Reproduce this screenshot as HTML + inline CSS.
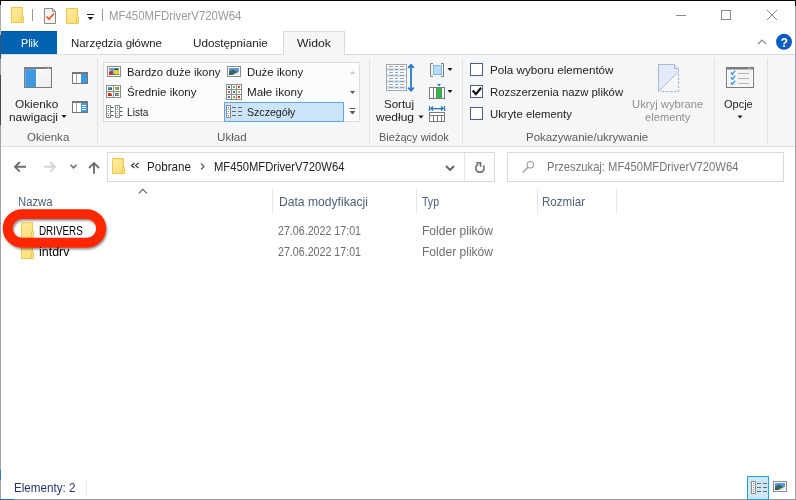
<!DOCTYPE html>
<html><head><meta charset="utf-8"><title>Explorer</title>
<style>
html,body{margin:0;padding:0}
body{width:796px;height:500px;overflow:hidden;position:relative;background:#fff;font-family:"Liberation Sans",sans-serif;font-size:12px}
.t{position:absolute;white-space:pre;line-height:14px;font-size:11.6px;transform-origin:0 0}
.a{position:absolute}
#svg{position:absolute;left:0;top:0}

</style></head><body>
<!-- window frame -->
<div class="a" style="left:0;top:0;width:796px;height:1px;background:#0a0a0a"></div>
<div class="a" style="left:0;top:0;width:1px;height:500px;background:linear-gradient(#0a0a0a 0,#0a0a0a 5px,#a8a8a8 5px,#a8a8a8 31px,#c8b8a8 31px,#c8b8a8 35px,#2f5577 35px,#2f5577 59px,#a2a2a2 59px,#a2a2a2 75px,#484848 75px,#484848 125px,#a2a2a2 125px,#a2a2a2 470px,#3a78b8 470px,#3a78b8 480px,#a2a2a2 480px)"></div>
<div class="a" style="left:795px;top:1px;width:1px;height:499px;background:linear-gradient(#0a0a0a 0,#0a0a0a 5px,#a4a4a4 5px)"></div>
<div class="a" style="left:0;top:499px;width:796px;height:1px;background:linear-gradient(90deg,#2a68b0 0,#2a68b0 14px,#9a9a9a 14px)"></div>
<!-- Plik tab -->
<div class="a" style="left:1px;top:31px;width:56px;height:23px;background:#0063b1;border-top:1px solid #0058a8;box-sizing:border-box"></div>
<!-- ribbon -->
<div class="a" style="left:1px;top:54px;width:794px;height:92px;background:#f5f6f7;border-top:1px solid #dadbdc;border-bottom:1px solid #dadbdc;box-sizing:content-box;height:91px"></div>
<!-- Widok tab -->
<div class="a" style="left:283px;top:31px;width:62px;height:24px;background:#f5f6f7;border:1px solid #dadbdc;border-bottom:none;box-sizing:border-box"></div>
<!-- group separators -->
<div class="a" style="left:97px;top:58px;width:1px;height:86px;background:#e2e3e4"></div>
<div class="a" style="left:369px;top:58px;width:1px;height:86px;background:#e2e3e4"></div>
<div class="a" style="left:462px;top:58px;width:1px;height:86px;background:#e2e3e4"></div>
<div class="a" style="left:714px;top:58px;width:1px;height:86px;background:#e2e3e4"></div>
<div class="a" style="left:767px;top:58px;width:1px;height:86px;background:#e2e3e4"></div>
<!-- gallery -->
<div class="a" style="left:103px;top:62px;width:257px;height:60px;background:#fbfcfd;border:1px solid #dcddde;box-sizing:border-box"></div>
<div class="a" style="left:224px;top:102px;width:120px;height:20px;background:#cce4f7;border:1px solid #62a5e6;box-sizing:border-box"></div>
<!-- address box -->
<div class="a" style="left:107px;top:152px;width:388px;height:30px;border:1px solid #d9d9d9;box-sizing:border-box"></div>
<div class="a" style="left:464px;top:153px;width:1px;height:28px;background:#e5e5e5"></div>
<div class="a" style="left:507px;top:152px;width:277px;height:30px;border:1px solid #d9d9d9;box-sizing:border-box"></div>
<!-- column separators -->
<div class="a" style="left:272px;top:189px;width:1px;height:25px;background:#e5e5e5"></div>
<div class="a" style="left:416px;top:189px;width:1px;height:25px;background:#e5e5e5"></div>
<div class="a" style="left:537px;top:189px;width:1px;height:25px;background:#e5e5e5"></div>
<div class="a" style="left:616px;top:189px;width:1px;height:25px;background:#e5e5e5"></div>
<!-- status bar -->
<div class="a" style="left:86px;top:481px;width:1px;height:14px;background:#e8e8e8"></div>
<div class="a" style="left:747px;top:476px;width:22px;height:24px;background:#cce8f6;border:1px solid #26a0da;box-sizing:border-box"></div>
<!-- checkboxes -->
<div class="a" style="left:470px;top:63px;width:13px;height:13px;background:#fff;border:1px solid #4a5f8c;box-sizing:border-box"></div>
<div class="a" style="left:470px;top:85px;width:13px;height:13px;background:#fff;border:1px solid #4a5f8c;box-sizing:border-box"></div>
<div class="a" style="left:470px;top:107px;width:13px;height:13px;background:#fff;border:1px solid #4a5f8c;box-sizing:border-box"></div>
<svg id="svg" width="796" height="500" viewBox="0 0 796 500">
<defs>
<linearGradient id="fg" x1="0" y1="0" x2="1" y2="1"><stop offset="0" stop-color="#ffeb9c"/><stop offset="1" stop-color="#fbdd7a"/></linearGradient>
<filter id="ds" x="-10%" y="-30%" width="125%" height="170%"><feDropShadow dx="1" dy="1.500" stdDeviation="1.100" flood-color="#000" flood-opacity="0.500"/></filter>
<linearGradient id="pg" x1="0" y1="0" x2="1" y2="1"><stop offset="0" stop-color="#ffffff"/><stop offset="1" stop-color="#ececec"/></linearGradient>
</defs>
<!-- title bar icons -->
<g transform="translate(11 7)"><path d="M0.5 0.5h11v15h-11z" fill="url(#fg)" stroke="#ecc84c"/><path d="M10.5 9.5h2v6h-2z" fill="#ffe993" stroke="#ecc84c"/></g>
<rect x="32" y="9" width="1" height="12" fill="#9a9a9a"/>
<path d="M44.5 8.5h8l3 3v12h-11z" fill="#f4f4f4" stroke="#8a8a8a"/><path d="M52.5 8.5v3h3" fill="none" stroke="#8a8a8a"/>
<path d="M46.5 16.5l2.5 2.5l5-5.5" fill="none" stroke="#f2571b" stroke-width="1.6"/>
<g transform="translate(66 8)"><path d="M0.5 0.5h11v15h-11z" fill="url(#fg)" stroke="#ecc84c"/><path d="M10.5 9.5h2v6h-2z" fill="#ffe993" stroke="#ecc84c"/></g>
<rect x="87" y="14" width="7" height="1" fill="#1a1a1a"/><path d="M87.5 17h6l-3 3z" fill="#1a1a1a"/>
<rect x="102" y="9" width="1" height="12" fill="#9a9a9a"/>
<!-- window controls -->
<rect x="676" y="15" width="10" height="1" fill="#8a8a8a"/>
<rect x="721.5" y="10.5" width="9" height="9" fill="none" stroke="#8a8a8a"/>
<path d="M767 10l10 10M777 10l-10 10" stroke="#8a8a8a" stroke-width="1" fill="none"/>
<path d="M758 44l4-4l4 4" fill="none" stroke="#8a8a8a" stroke-width="1.2"/>
<circle cx="784" cy="41.8" r="8" fill="#0a5cc0"/>
<!-- nav pane icon -->
<rect x="24.500" y="67.500" width="27" height="20" fill="url(#pg)" stroke="#7c7c7c"/><rect x="25" y="68" width="26" height="1" fill="#7c7c7c"/><rect x="46" y="68" width="1" height="1" fill="#d0d0d0"/><rect x="48" y="68" width="1" height="1" fill="#d0d0d0"/>
<rect x="25" y="69" width="11" height="18" fill="#3f97e0"/><rect x="25" y="69" width="1" height="18" fill="#62aeee"/><rect x="25" y="69" width="11" height="1" fill="#5aa8ea"/><rect x="36" y="69" width="1" height="18" fill="#fff"/>
<rect x="72.500" y="72.500" width="15" height="11" fill="#fff" stroke="#767676"/><rect x="73" y="73" width="14" height="1" fill="#767676"/><rect x="76" y="74" width="1" height="9" fill="#a8a8a8"/><rect x="81" y="74" width="6" height="9" fill="#3a96dd"/>
<rect x="72.500" y="101.500" width="15" height="11" fill="#fff" stroke="#767676"/><rect x="73" y="102" width="14" height="1" fill="#767676"/><rect x="76" y="103" width="1" height="9" fill="#a8a8a8"/><rect x="81" y="103" width="6" height="9" fill="#3a96dd"/>
<path d="M82 105.500h4M82 107.500h4M82 109.500h4" stroke="#fff" stroke-width="1"/>
<path d="M61.500 115h5l-2.500 3z" fill="#1a1a1a"/>
<!-- gallery scroll -->
<path d="M350 74h5l-2.500-3z" fill="#c4c4c4"/>
<path d="M350 91h5l-2.500 3z" fill="#5a5a5a"/>
<rect x="349.500" y="108" width="6" height="1" fill="#5a5a5a"/><path d="M349.500 111h6l-3 3.500z" fill="#5a5a5a"/>
<!-- sort arrows text -->
<path d="M418.500 115.500h5l-2.500 3z" fill="#1a1a1a"/>
<path d="M737.500 115.500h5l-2.500 3z" fill="#1a1a1a"/>
<path d="M447.500 68h5l-2.500 3z" fill="#1a1a1a"/>
<path d="M447.500 90h5l-2.500 3z" fill="#1a1a1a"/>
<!-- checkmark -->
<path d="M471.900 91.300l1.600-1.600l2.300 2.700l4.500-5.300l1.600 1.300l-6 7.300z" fill="#111"/>
<!-- gallery icons -->
<g id="pic1"><rect x="107.5" y="66.5" width="13" height="10" fill="#fff" stroke="#8c8c8c"/><rect x="109" y="68" width="10" height="7" fill="#5b9bf0"/><path d="M109 75v-3l2.500-1l2.500 4z" fill="#d8302a"/><path d="M110.500 71.500l1.500 2l1-2z" fill="#4a50c8"/><rect x="109" y="70" width="2" height="1" fill="#f0d020"/><rect x="113" y="74" width="6" height="1" fill="#18a038"/><circle cx="116.200" cy="71.700" r="2.700" fill="#f2d21c"/><path d="M114 70a2.700 2.700 0 0 1 4.500 0z" fill="#5a2a10"/></g>
<g id="pic2"><rect x="227.500" y="66.500" width="13" height="10" fill="#fff" stroke="#8c8c8c"/><rect x="229" y="68" width="10" height="7" fill="#5a9ce8"/><path d="M229 71.500l4-2l6 3v2.500h-10z" fill="#3a6858"/><path d="M232 75l7-3.500v3.500z" fill="#d8e8f0"/><path d="M229 73.500l5 1.500h-5z" fill="#24506a"/></g>
<!-- medium icons -->
<rect x="106.500" y="85.500" width="14" height="12" fill="#fff" stroke="#8c8c8c"/><rect x="113" y="86" width="1" height="11" fill="#8c8c8c"/><rect x="107" y="91" width="13" height="1" fill="#8c8c8c"/>
<rect x="108" y="87" width="4" height="3" fill="#5a9ce8"/><path d="M108 89l4-1v2h-4z" fill="#3a6858"/>
<rect x="115" y="87" width="4" height="3" fill="#7ab048"/><path d="M117 87h2v2z" fill="#8060d0"/><path d="M115 88l2 2h-2z" fill="#e0b020"/>
<rect x="108" y="93" width="4" height="3" fill="#d02818"/><path d="M110 93h2v2z" fill="#e8b820"/>
<rect x="115" y="93" width="4" height="3" fill="#3a70d0"/><rect x="116" y="94" width="3" height="1.500" fill="#e0c020"/><rect x="115" y="95.500" width="4" height="0.500" fill="#208040"/>
<!-- small icons -->
<rect x="226.500" y="84.500" width="15" height="15" fill="#fff" stroke="#8c8c8c"/><path d="M231.500 85v14M236.500 85v14M227 89.500h14M227 94.500h14" stroke="#8c8c8c" fill="none"/>
<g><rect x="228" y="86" width="2" height="2" fill="#3a78c8"/><rect x="233" y="86" width="2" height="2" fill="#78a848"/><rect x="238" y="86" width="2" height="2" fill="#c83020"/>
<rect x="228" y="91" width="2" height="2" fill="#d06030"/><rect x="233" y="91" width="2" height="2" fill="#3a78c8"/><rect x="238" y="91" width="2" height="2" fill="#a0a860"/>
<rect x="228" y="96" width="2" height="2" fill="#3a78c8"/><rect x="233" y="96" width="2" height="2" fill="#c8a030"/><rect x="238" y="96" width="2" height="2" fill="#c83020"/>
<rect x="229" y="87" width="1" height="1" fill="#285038"/><rect x="234" y="86" width="1" height="1" fill="#d0a030"/><rect x="239" y="87" width="1" height="1" fill="#e0a020"/><rect x="229" y="91" width="1" height="1" fill="#3a78c8"/><rect x="234" y="97" width="1" height="1" fill="#3a78c8"/></g>
<!-- list icon -->
<g id="lbox"><rect x="106.500" y="105.500" width="4" height="12" fill="#fff" stroke="#8c8c8c"/><rect x="107" y="109" width="3" height="1" fill="#c8c8c8"/><rect x="107" y="113" width="3" height="1" fill="#c8c8c8"/><rect x="108" y="107" width="1" height="1" fill="#2a7a4a"/><rect x="108" y="111" width="1" height="1" fill="#3a8aee"/><rect x="108" y="115" width="1" height="1" fill="#e02020"/></g>
<path d="M111 107.500h2.500M111 111.500h2.500M111 115.500h2.500M120 107.500h2.500M120 111.500h2.500M120 115.500h2.500" stroke="#5a5a5a" fill="none"/>
<g transform="translate(9 0)"><rect x="106.500" y="105.500" width="4" height="12" fill="#fff" stroke="#8c8c8c"/><rect x="107" y="109" width="3" height="1" fill="#c8c8c8"/><rect x="107" y="113" width="3" height="1" fill="#c8c8c8"/><rect x="108" y="107" width="1" height="1" fill="#2a7a4a"/><rect x="108" y="111" width="1" height="1" fill="#3a8aee"/><rect x="108" y="115" width="1" height="1" fill="#e02020"/></g>
<g transform="translate(120 0)"><rect x="106.500" y="105.500" width="4" height="12" fill="#fff" stroke="#8c8c8c"/><rect x="107" y="109" width="3" height="1" fill="#c8c8c8"/><rect x="107" y="113" width="3" height="1" fill="#c8c8c8"/><rect x="108" y="107" width="1" height="1" fill="#2a7a4a"/><rect x="108" y="111" width="1" height="1" fill="#3a8aee"/><rect x="108" y="115" width="1" height="1" fill="#e02020"/></g>
<path d="M232 107.500h4M232 111.500h4M232 115.500h4M238 107.500h4M238 111.500h4M238 115.500h4" stroke="#6a6a6a" fill="none"/>
<!-- sort icon -->
<rect x="386.500" y="64.500" width="20" height="26" fill="#fff" stroke="#a4a4a4"/>
<rect x="387" y="68" width="19" height="3" fill="#cfe3f7"/><rect x="387" y="74" width="19" height="3" fill="#cfe3f7"/><rect x="387" y="80" width="19" height="3" fill="#cfe3f7"/><rect x="387" y="86" width="19" height="3" fill="#cfe3f7"/>
<path d="M389 66.500h4M395 66.500h3M400 66.500h4M389 69.500h4M395 69.500h3M400 69.500h4M389 72.500h4M395 72.500h3M400 72.500h4M389 75.500h4M395 75.500h3M400 75.500h4M389 78.500h4M395 78.500h3M400 78.500h4M389 81.500h4M395 81.500h3M400 81.500h4M389 84.500h4M395 84.500h3M400 84.500h4M389 87.500h4M395 87.500h3M400 87.500h4" stroke="#a0a0a0" fill="none"/>
<path d="M411 65.500v24" stroke="#2878c8" stroke-width="1.800" fill="none"/><path d="M408.200 67.800l2.800-3l2.800 3M408.200 87.700l2.800 3l2.800-3" fill="none" stroke="#2878c8" stroke-width="1.700"/>
<!-- group by -->
<path d="M433 63.500h-2.500v13h2.500M441 63.500h2.500v13h-2.500" fill="none" stroke="#7a7a7a"/><rect x="433.500" y="65.500" width="8" height="9" fill="#b9dcfb" stroke="#7ab6ee"/>
<!-- add columns -->
<rect x="429.500" y="87.500" width="15" height="11" fill="#fff" stroke="#7a7a7a"/><path d="M433.500 88v10M436.500 88v10M441.500 88v10" stroke="#7a7a7a" fill="none"/><rect x="437" y="88" width="4" height="10" fill="#20c040"/><path d="M437 84h4l-2 2.500z" fill="#2878c8"/>
<!-- size columns -->
<path d="M429.500 106v5M444.500 106v5M431 108.500h12M433 106.500l-2 2l2 2M441 106.500l2 2l-2 2" stroke="#2878c8" stroke-width="1.250" fill="none"/>
<rect x="429.500" y="112.500" width="15" height="9" fill="#fff" stroke="#7a7a7a"/><path d="M430 115.500h14M433.500 116v5M437.500 116v5M441.500 116v5" stroke="#7a7a7a" fill="none"/>
<!-- hide selected -->
<path d="M658.500 64.500H674.500L678.500 68.500V71.500L658.500 91.500Z" fill="#e3eaf8" stroke="#a9b9d8"/>
<path d="M674.500 64.500V68.500H678.500" fill="#dde6f5" stroke="#a9b9d8"/>
<path d="M678.500 73.500V91.500H660" fill="none" stroke="#9fafd0" stroke-width="1.100" stroke-dasharray="2.500 1.500"/>
<!-- options -->
<rect x="726.500" y="67.500" width="27" height="20" fill="#fdfdfd" stroke="#7c7c7c"/><rect x="727" y="68" width="26" height="1.500" fill="#7c7c7c"/><rect x="748" y="68" width="1" height="1" fill="#d0d0d0"/><rect x="750" y="68" width="1" height="1" fill="#d0d0d0"/>
<rect x="728" y="70" width="24" height="16.500" fill="#f4f4f4"/>
<rect x="731" y="72.500" width="3" height="2.500" fill="#dcdcdc"/><rect x="731" y="77.500" width="3" height="2.500" fill="#dcdcdc"/><rect x="731" y="82.500" width="3" height="2.500" fill="#dcdcdc"/>
<path d="M730.800 72.500l1.600 1.700l2.800-3.600M730.800 77.500l1.600 1.700l2.800-3.600M730.800 82.500l1.600 1.700l2.800-3.600" stroke="#3a96ea" stroke-width="1.250" fill="none"/>
<path d="M738 73.500h11M738 78.500h11M738 83.500h11" stroke="#b8b8b8" fill="none"/>
<!-- status bar icons -->
<rect x="751.500" y="481.500" width="4" height="12" fill="#fff" stroke="#8c8c8c"/><rect x="752" y="485" width="3" height="1" fill="#c8c8c8"/><rect x="752" y="489" width="3" height="1" fill="#c8c8c8"/><rect x="753" y="483" width="1" height="1" fill="#2a7a4a"/><rect x="753" y="487" width="1" height="1" fill="#3a8aee"/><rect x="753" y="491" width="1" height="1" fill="#e02020"/>
<path d="M757 483.500h4M757 487.500h4M757 491.500h4M763 483.500h4M763 487.500h4M763 491.500h4" stroke="#6a6a6a" fill="none"/>
<rect x="773.500" y="481.500" width="13" height="10" fill="#fff" stroke="#8c8c8c"/><rect x="775" y="483" width="10" height="7" fill="#5a9ce8"/><path d="M775 486.500l4-2l6 3v2.500h-10z" fill="#3a6858"/><path d="M778 490l7-3.500v3.500z" fill="#d8e8f0"/><path d="M775 488.500l5 1.500h-5z" fill="#24506a"/>

<!-- nav arrows -->
<g fill="none" stroke="#6e6e6e" stroke-width="1.9"><path d="M26 166.800h-11M19.800 162l-4.800 4.800l4.800 4.800"/></g>
<g fill="none" stroke="#d6d6d6" stroke-width="1.9"><path d="M44 166.800h11M50.200 162l4.800 4.800l-4.800 4.800"/></g>
<path d="M70.500 164.800l3 3l3-3" fill="none" stroke="#6e6e6e" stroke-width="1.600"/>
<g fill="none" stroke="#6e6e6e" stroke-width="1.9"><path d="M94 173.800v-10.500M89 168l5-5l5 5"/></g>
<g transform="translate(112 158)"><path d="M0.5 0.5h11v15h-11z" fill="url(#fg)" stroke="#ecc84c"/><path d="M10.5 9.5h2v6h-2z" fill="#ffe993" stroke="#ecc84c"/></g>
<path d="M134.500 163l-3 2.500l3 2.500M138.500 163l-3 2.500l3 2.500" fill="none" stroke="#2b2b2b" stroke-width="1.100"/>
<path d="M201 163.500l3 3l-3 3" fill="none" stroke="#5a5a5a" stroke-width="1.200"/>
<path d="M446 166l4 4l4-4" fill="none" stroke="#606060" stroke-width="1.900"/>
<path d="M483.300 165.600A4.200 4.200 0 1 1 478.500 164.150" fill="none" stroke="#6a6a6a" stroke-width="1.600"/><path d="M476.200 162.800H480.500V166.800" fill="none" stroke="#6a6a6a" stroke-width="1.600"/>
<circle cx="530.300" cy="164.800" r="3.400" fill="none" stroke="#8a8a92" stroke-width="1"/><path d="M528 167.300l-5.300 5.200" stroke="#8a8a92" stroke-width="1.100"/>
<path d="M138.800 193.300l4-4l4 4" fill="none" stroke="#606060" stroke-width="1.100"/>
<!-- row folders -->
<g transform="translate(21 222.200)"><path d="M0.5 0.5h11v15h-11z" fill="url(#fg)" stroke="#ecc84c"/><path d="M10.5 9.5h2v6h-2z" fill="#ffe993" stroke="#ecc84c"/></g>
<g transform="translate(21 243)"><path d="M0.5 0.5h11v15h-11z" fill="url(#fg)" stroke="#ecc84c"/><path d="M10.5 9.5h2v6h-2z" fill="#ffe993" stroke="#ecc84c"/></g>
<!-- red annotation -->
<rect x="7.700" y="214.100" width="93.400" height="28.700" rx="14.350" ry="14.350" fill="none" stroke="#ff2800" stroke-width="9.900" filter="url(#ds)"/>
</svg>
<span class="t" style="left:780.5px;top:35.5px;color:#fff;font-weight:bold;font-size:12px">?</span>

<span class="t" style="left:108.7px;top:9.0px;color:#9a9a9a;font-size:12.4px;transform:scaleX(0.9199)">MF450MFDriverV720W64</span>
<span class="t" style="left:20.5px;top:36.0px;color:#ffffff;font-size:11.6px;transform:scaleX(0.9311)">Plik</span>
<span class="t" style="left:71.1px;top:36.0px;color:#222222;font-size:11.6px;transform:scaleX(0.9864)">Narzędzia główne</span>
<span class="t" style="left:192.7px;top:36.0px;color:#222222;font-size:11.6px;transform:scaleX(1.0089)">Udostępnianie</span>
<span class="t" style="left:296.7px;top:36.0px;color:#222222;font-size:11.6px;transform:scaleX(1.0553)">Widok</span>
<span class="t" style="left:127.3px;top:65.0px;color:#222222;font-size:11.6px;transform:scaleX(0.9791)">Bardzo duże ikony</span>
<span class="t" style="left:127.3px;top:85.0px;color:#222222;font-size:11.6px;transform:scaleX(0.9879)">Średnie ikony</span>
<span class="t" style="left:127.3px;top:105.0px;color:#222222;font-size:11.6px;transform:scaleX(0.8735)">Lista</span>
<span class="t" style="left:247.4px;top:65.0px;color:#222222;font-size:11.6px;transform:scaleX(0.9815)">Duże ikony</span>
<span class="t" style="left:247.4px;top:85.0px;color:#222222;font-size:11.6px;transform:scaleX(1.0068)">Małe ikony</span>
<span class="t" style="left:247.4px;top:105.0px;color:#222222;font-size:11.6px;transform:scaleX(0.9140)">Szczegóły</span>
<span class="t" style="left:15.1px;top:97.0px;color:#222222;font-size:11.6px;transform:scaleX(1.0157)">Okienko</span>
<span class="t" style="left:9.0px;top:110.0px;color:#222222;font-size:11.6px;transform:scaleX(1.0272)">nawigacji</span>
<span class="t" style="left:27.2px;top:130.0px;color:#5a5a5a;font-size:11.6px;transform:scaleX(0.9946)">Okienka</span>
<span class="t" style="left:216.7px;top:130.0px;color:#5a5a5a;font-size:11.6px;transform:scaleX(1.0015)">Układ</span>
<span class="t" style="left:379.3px;top:130.0px;color:#5a5a5a;font-size:11.6px;transform:scaleX(0.9501)">Bieżący widok</span>
<span class="t" style="left:526.3px;top:130.0px;color:#5a5a5a;font-size:11.6px;transform:scaleX(0.9876)">Pokazywanie/ukrywanie</span>
<span class="t" style="left:384.1px;top:97.0px;color:#222222;font-size:11.6px;transform:scaleX(0.9935)">Sortuj</span>
<span class="t" style="left:376.0px;top:110.0px;color:#222222;font-size:11.6px;transform:scaleX(1.0340)">według</span>
<span class="t" style="left:490.2px;top:63.0px;color:#222222;font-size:11.6px;transform:scaleX(1.0033)">Pola wyboru elementów</span>
<span class="t" style="left:490.2px;top:85.0px;color:#222222;font-size:11.6px;transform:scaleX(0.9789)">Rozszerzenia nazw plików</span>
<span class="t" style="left:490.2px;top:107.0px;color:#222222;font-size:11.6px;transform:scaleX(0.9777)">Ukryte elementy</span>
<span class="t" style="left:632.4px;top:97.0px;color:#8f8f8f;font-size:11.6px;transform:scaleX(0.9707)">Ukryj wybrane</span>
<span class="t" style="left:645.4px;top:110.0px;color:#8f8f8f;font-size:11.6px;transform:scaleX(0.9629)">elementy</span>
<span class="t" style="left:724.3px;top:97.0px;color:#222222;font-size:11.6px;transform:scaleX(0.9473)">Opcje</span>
<span class="t" style="left:146.7px;top:160.0px;color:#222222;font-size:12.6px;transform:scaleX(0.9218)">Pobrane</span>
<span class="t" style="left:213.7px;top:160.0px;color:#222222;font-size:12.6px;transform:scaleX(0.8914)">MF450MFDriverV720W64</span>
<span class="t" style="left:547.4px;top:160.0px;color:#757575;font-size:12.6px;transform:scaleX(0.8908)">Przeszukaj: MF450MFDriverV720W64</span>
<span class="t" style="left:17.6px;top:195.0px;color:#4c607a;font-size:12.6px;transform:scaleX(0.8935)">Nazwa</span>
<span class="t" style="left:278.5px;top:195.0px;color:#4c607a;font-size:12.6px;transform:scaleX(0.9622)">Data modyfikacji</span>
<span class="t" style="left:422.1px;top:195.0px;color:#4c607a;font-size:12.6px;transform:scaleX(0.8369)">Typ</span>
<span class="t" style="left:542.1px;top:195.0px;color:#4c607a;font-size:12.6px;transform:scaleX(0.9170)">Rozmiar</span>
<span class="t" style="left:39.1px;top:224.0px;color:#000000;font-size:12.6px;transform:scaleX(0.7824)">DRIVERS</span>
<span class="t" style="left:38.5px;top:245.0px;color:#000000;font-size:12.6px;transform:scaleX(0.9871)">intdrv</span>
<span class="t" style="left:278.4px;top:224.0px;color:#6d6d6d;font-size:12.6px;transform:scaleX(0.8465)">27.06.2022 17:01</span>
<span class="t" style="left:278.4px;top:245.0px;color:#6d6d6d;font-size:12.6px;transform:scaleX(0.8465)">27.06.2022 17:01</span>
<span class="t" style="left:422.1px;top:224.0px;color:#6d6d6d;font-size:12.6px;transform:scaleX(0.9568)">Folder plików</span>
<span class="t" style="left:422.1px;top:245.0px;color:#6d6d6d;font-size:12.6px;transform:scaleX(0.9568)">Folder plików</span>
<span class="t" style="left:13.9px;top:481.0px;color:#24326e;font-size:12.6px;transform:scaleX(0.9233)">Elementy: 2</span>
</body></html>
